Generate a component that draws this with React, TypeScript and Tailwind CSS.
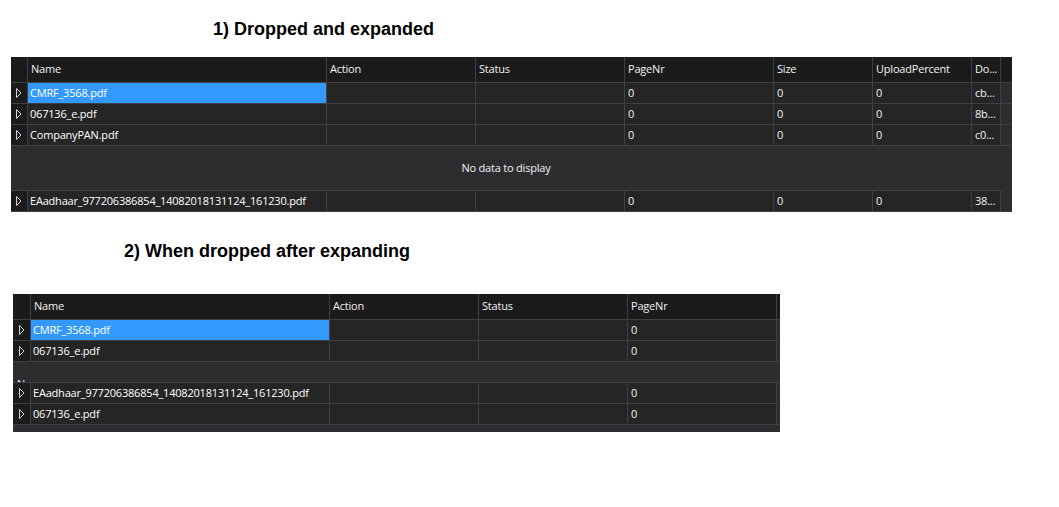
const cols1 = [
  { title: "Name", w: "w-[299px]" },
  { title: "Action", w: "w-[149px]" },
  { title: "Status", w: "w-[149px]" },
  { title: "PageNr", w: "w-[149px]" },
  { title: "Size", w: "w-[99px]" },
  { title: "UploadPercent", w: "w-[99px]" },
  { title: "Do...", w: "w-[29px]" },
];

const cols2 = cols1.slice(0, 4);

type Row = { name: string; values: string[]; selected?: boolean };

const rows1a: Row[] = [
  { name: "CMRF_3568.pdf", values: ["", "", "0", "0", "0", "cb..."], selected: true },
  { name: "067136_e.pdf", values: ["", "", "0", "0", "0", "8b..."] },
  { name: "CompanyPAN.pdf", values: ["", "", "0", "0", "0", "c0..."] },
];
const rows1b: Row[] = [
  { name: "EAadhaar_977206386854_14082018131124_161230.pdf", values: ["", "", "0", "0", "0", "38..."] },
];

const rows2a: Row[] = [
  { name: "CMRF_3568.pdf", values: ["", "", "0"], selected: true },
  { name: "067136_e.pdf", values: ["", "", "0"] },
];
const rows2b: Row[] = [
  { name: "EAadhaar_977206386854_14082018131124_161230.pdf", values: ["", "", "0"] },
  { name: "067136_e.pdf", values: ["", "", "0"] },
];

const Arrow = () => (
  <svg width="6" height="10" viewBox="0 0 6 10">
    <polygon points="0.5,0.5 5,5 0.5,9.5" fill="none" stroke="#d4d4d4" strokeWidth="1" />
  </svg>
);

const Header = ({ cols, ind }: { cols: typeof cols1; ind: string }) => (
  <div className="flex h-[26px] bg-[#1b1b1c] border-b border-[#3f3f46]">
    <div className={`${ind} shrink-0 border-r border-[#3f3f46]`} />
    {cols.map((c) => (
      <div key={c.title} className={`${c.w} shrink-0 border-r border-[#3f3f46] pl-[3px] flex items-center text-[#f1f1f1]`}>
        {c.title}
      </div>
    ))}
  </div>
);

const DataRow = ({ row, cols, ind }: { row: Row; cols: typeof cols1; ind: string }) => (
  <div className="flex h-[21px] border-b border-[#3f3f46]">
    <div className={`${ind} shrink-0 bg-[#1b1b1c] border-r border-[#3f3f46] flex items-center justify-center`}>
      <Arrow />
    </div>
    <div className={`${cols[0].w} shrink-0 border-r border-[#3f3f46] bg-[#252526] flex`}>
      <div className={`flex-1 flex items-center pl-[2px] text-white ${row.selected ? "bg-[#3399ff]" : ""}`}>
        {row.name}
      </div>
    </div>
    {row.values.map((v, i) => (
      <div key={i} className={`${cols[i + 1].w} shrink-0 border-r border-[#3f3f46] bg-[#252526] pl-[3px] flex items-center text-[#f1f1f1]`}>
        {v}
      </div>
    ))}
  </div>
);

export default function App() {
  return (
    <div className="w-[1059px] h-[507px] bg-white flex flex-col font-['Open_Sans',sans-serif] text-[11px] tracking-[-0.2px]">
      <h1 className="mt-[17px] ml-[213px] h-[24px] leading-[24px] text-[18px] font-bold text-black tracking-normal font-['Liberation_Sans',sans-serif]">
        1) Dropped and expanded
      </h1>

      <div className="mt-4 ml-[11px] w-[1001px] bg-[#2d2d30] flex flex-col">
        <Header cols={cols1} ind="w-[17px]" />
        {rows1a.map((r) => (
          <DataRow key={r.name} row={r} cols={cols1} ind="w-[17px]" />
        ))}
        <div className="h-[45px] border-b border-[#3f3f46] w-[990px] flex items-center justify-center text-[#f1f1f1]">
          No data to display
        </div>
        {rows1b.map((r) => (
          <DataRow key={r.name} row={r} cols={cols1} ind="w-[17px]" />
        ))}
      </div>

      <h2 className="mt-[27px] ml-[124px] h-[24px] leading-[24px] text-[18px] font-bold text-black tracking-normal font-['Liberation_Sans',sans-serif]">
        2) When dropped after expanding
      </h2>

      <div className="mt-[31px] ml-[13px] w-[767px] bg-[#2d2d30] flex flex-col pb-[7px]">
        <Header cols={cols2} ind="w-[18px]" />
        {rows2a.map((r) => (
          <DataRow key={r.name} row={r} cols={cols2} ind="w-[18px]" />
        ))}
        <div className="h-[21px] border-b border-[#3f3f46] overflow-hidden pl-[4px] pt-[15px] leading-[14px] text-[#f1f1f1]">
          N
        </div>
        {rows2b.map((r, i) => (
          <DataRow key={i} row={r} cols={cols2} ind="w-[18px]" />
        ))}
      </div>
    </div>
  );
}
